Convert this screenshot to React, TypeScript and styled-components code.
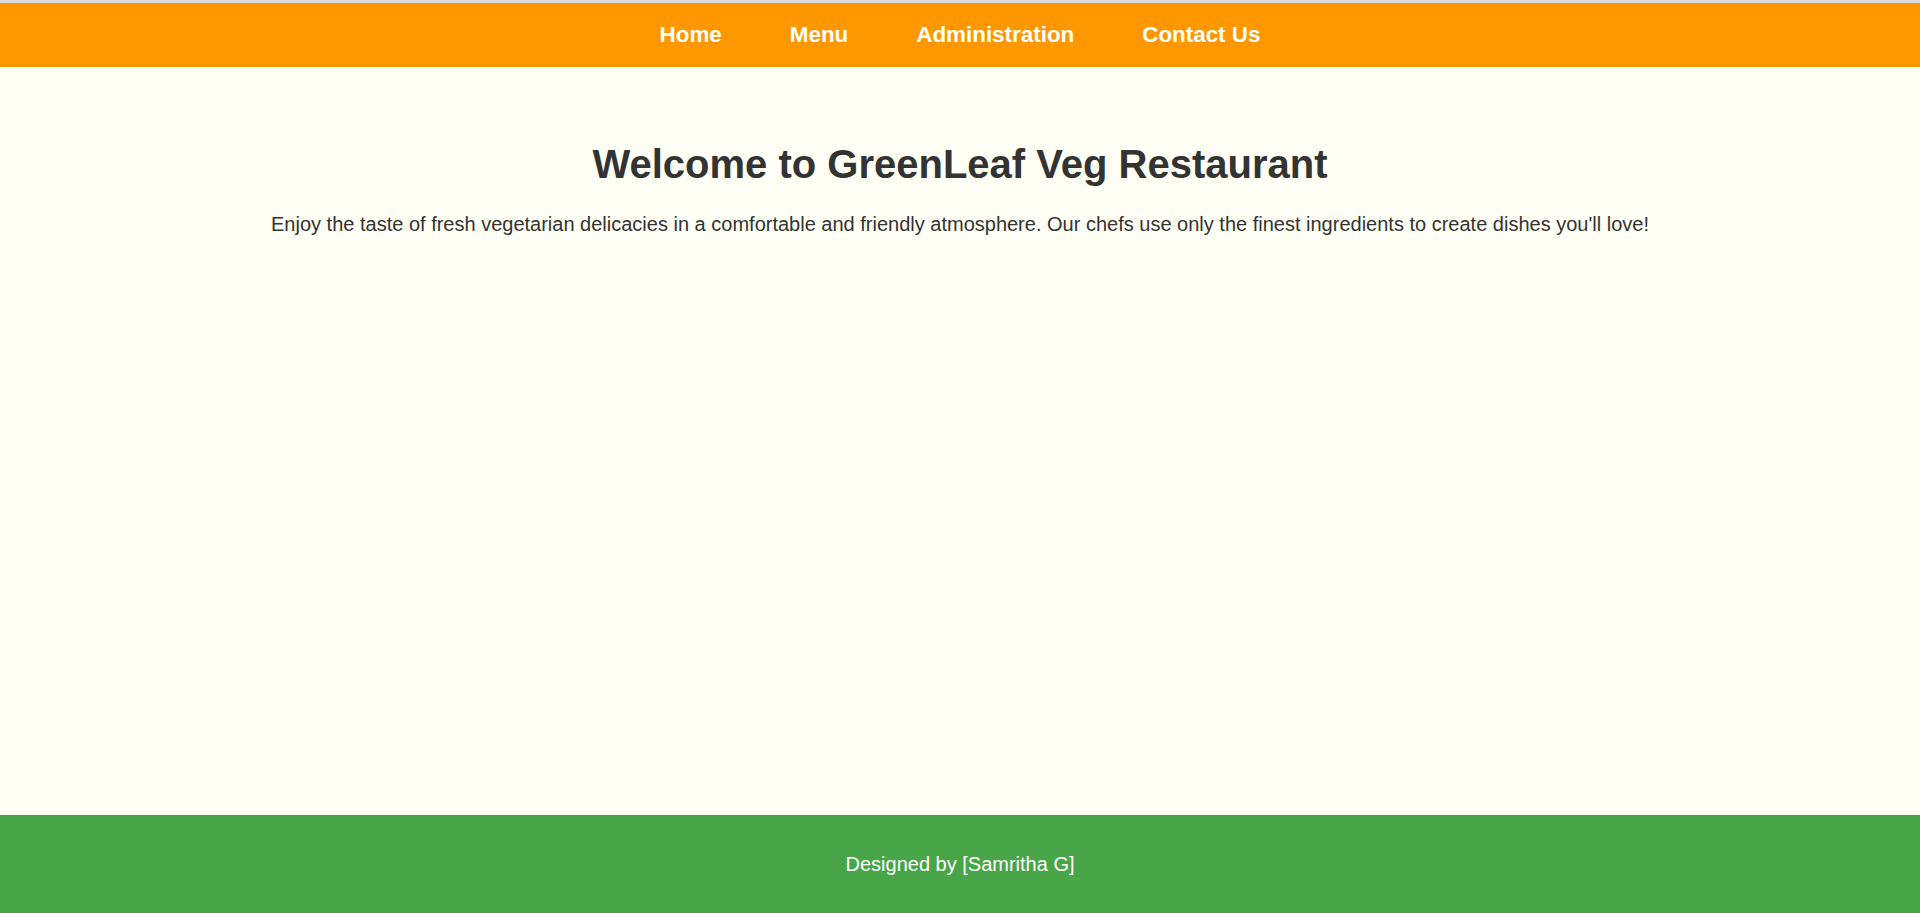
import React from "react";
import styled, { createGlobalStyle } from "styled-components";

const GlobalStyle = createGlobalStyle`
  html, body {
    margin: 0;
    padding: 0;
  }
  body {
    font-family: "Liberation Sans", Arial, sans-serif;
    background: #fffff5;
    color: #333333;
  }
`;

const Page = styled.div`
  min-height: 100vh;
  display: flex;
  flex-direction: column;
  border-top: 3px solid #dcdcdc;
  box-sizing: border-box;
`;

const NavBar = styled.nav`
  background: #ff9800;
  height: 64px;
  display: flex;
  align-items: center;
  justify-content: center;
  gap: 68px;
`;

const NavLink = styled.a`
  color: #ffffff;
  font-weight: bold;
  font-size: 22.4px;
  text-decoration: none;
  cursor: pointer;
  margin-top: -1px;
`;

const Main = styled.main`
  flex: 1;
  padding: 75px 20px 0;
  text-align: center;
`;

const Title = styled.h1`
  margin: 0;
  font-size: 40px;
  font-weight: bold;
  color: #333333;
`;

const Intro = styled.p`
  margin: 26px 0 0;
  font-size: 20px;
  color: #333333;
`;

const Footer = styled.footer`
  background: #48a548;
  color: #ffffff;
  height: 98px;
  display: flex;
  align-items: center;
  justify-content: center;
  font-size: 20px;
`;

export default function App() {
  return (
    <>
      <GlobalStyle />
      <Page>
        <NavBar>
          <NavLink href="#">Home</NavLink>
          <NavLink href="#">Menu</NavLink>
          <NavLink href="#">Administration</NavLink>
          <NavLink href="#">Contact Us</NavLink>
        </NavBar>
        <Main>
          <Title>Welcome to GreenLeaf Veg Restaurant</Title>
          <Intro>
            Enjoy the taste of fresh vegetarian delicacies in a comfortable and
            friendly atmosphere. Our chefs use only the finest ingredients to
            create dishes you'll love!
          </Intro>
        </Main>
        <Footer>Designed by [Samritha G]</Footer>
      </Page>
    </>
  );
}
